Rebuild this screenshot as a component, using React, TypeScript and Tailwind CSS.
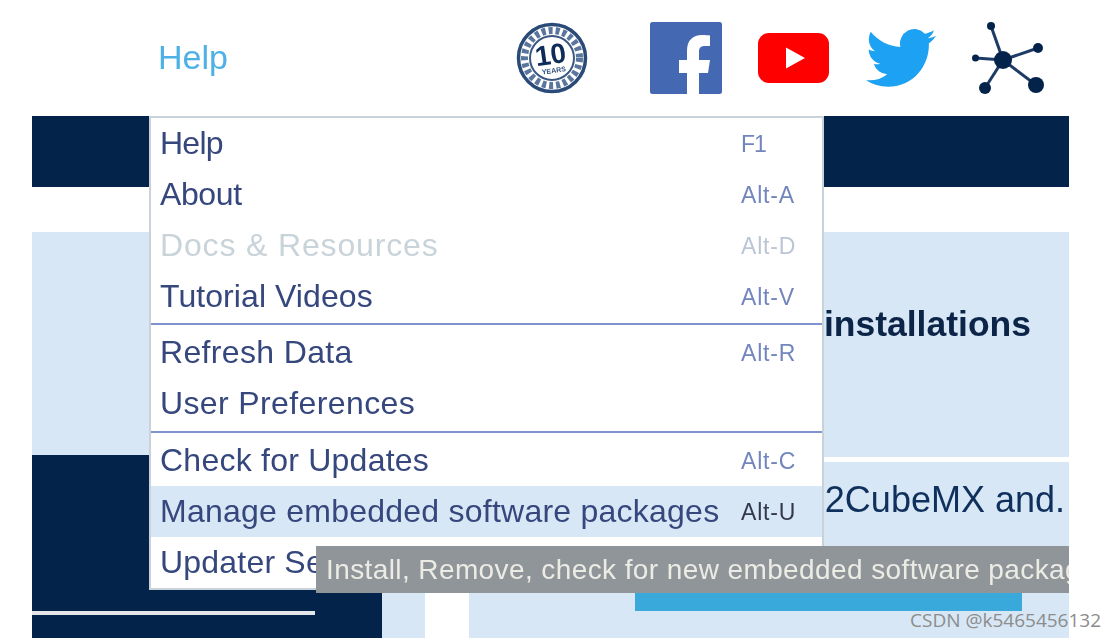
import React from "react";

type Item = { label: string; key?: string; state?: "disabled" | "active"; track: string };

const groups: Item[][] = [
  [
    { label: "Help", key: "F1", track: "tracking-[-0.75px]" },
    { label: "About", key: "Alt-A", track: "tracking-[-0.4px]" },
    { label: "Docs & Resources", key: "Alt-D", state: "disabled", track: "tracking-[0.85px]" },
    { label: "Tutorial Videos", key: "Alt-V", track: "tracking-[0.07px]" },
  ],
  [
    { label: "Refresh Data", key: "Alt-R", track: "tracking-[0.35px]" },
    { label: "User Preferences", track: "tracking-[0.38px]" },
  ],
  [
    { label: "Check for Updates", key: "Alt-C", track: "tracking-[0.24px]" },
    { label: "Manage embedded software packages", key: "Alt-U", state: "active", track: "tracking-[0.24px]" },
    { label: "Updater Settings", track: "tracking-[0.2px]" },
  ],
];

function Row({ item }: { item: Item }) {
  const bg = item.state === "active" ? "bg-[#d7e7f5]" : "bg-white";
  const label = item.state === "disabled" ? "text-[#c9d3da]" : "text-[#35477c]";
  const key =
    item.state === "disabled"
      ? "text-[#bcc5d6]"
      : item.state === "active"
        ? "text-[#33384f]"
        : "text-[#7285bd]";
  const keyTrack = item.key === "F1" ? "tracking-[-1px]" : "tracking-[0.8px]";
  return (
    <div className={`flex h-[51px] items-center pl-[9px] ${bg}`}>
      <span className={`w-[581px] shrink-0 whitespace-nowrap pb-[2px] text-[32px] leading-none ${label} ${item.track}`}>
        {item.label}
      </span>
      <span className={`whitespace-nowrap pt-[2px] text-[23px] leading-none ${key} ${keyTrack}`}>{item.key}</span>
    </div>
  );
}

function Badge() {
  return (
    <svg width="72" height="72" viewBox="0 0 72 72" className="shrink-0">
      <circle cx="36" cy="36" r="33.5" fill="#fff" stroke="#2a4a78" strokeWidth="3.5" />
      <circle cx="36" cy="36" r="27.5" fill="none" stroke="#5a769c" strokeWidth="7" strokeDasharray="4 3" />
      <circle cx="36" cy="36" r="22" fill="#fff" stroke="#3a5884" strokeWidth="2" />
      <g transform="rotate(-8 36 36)">
        <text x="35" y="42" textAnchor="middle" fontFamily="Liberation Sans" fontWeight="700" fontSize="28" fill="#0f2c58">
          10
        </text>
        <text x="36" y="51" textAnchor="middle" fontFamily="Liberation Sans" fontWeight="700" fontSize="7" fill="#2f4f7c">
          YEARS
        </text>
      </g>
    </svg>
  );
}

function Facebook() {
  return (
    <svg width="72" height="72" viewBox="0 0 72 72" className="shrink-0">
      <rect width="72" height="72" rx="2.5" fill="#4568b2" />
      <path
        d="M37 72V51H29V38H37V29C37 18 43 13 52 13C55 13 58 13.2 60 13.5V24H55C50.5 24 49 26 49 30V38H60L58 51H49V72z"
        fill="#fff"
      />
    </svg>
  );
}

function Youtube() {
  return (
    <svg width="71" height="50" viewBox="0 0 71 50" className="shrink-0">
      <rect width="71" height="50" rx="11" fill="#ff0000" />
      <path d="M28 14.5 47 25 28 35.5z" fill="#fff" />
    </svg>
  );
}

function Twitter() {
  return (
    <svg width="70" height="59" viewBox="0 0 24 20" preserveAspectRatio="none" className="shrink-0">
      <path
        transform="translate(0 -2.2)"
        fill="#1da1f2"
        d="M23.953 4.57a10 10 0 01-2.825.775 4.958 4.958 0 002.163-2.723c-.951.555-2.005.959-3.127 1.184a4.92 4.92 0 00-8.384 4.482C7.69 8.095 4.067 6.13 1.64 3.162a4.822 4.822 0 00-.666 2.475c0 1.71.87 3.213 2.188 4.096a4.904 4.904 0 01-2.228-.616v.06a4.923 4.923 0 003.946 4.827 4.996 4.996 0 01-2.212.085 4.936 4.936 0 004.604 3.417 9.867 9.867 0 01-6.102 2.105c-.39 0-.779-.023-1.17-.067a13.995 13.995 0 007.557 2.209c9.053 0 13.998-7.496 13.998-13.985 0-.21 0-.42-.015-.63A9.935 9.935 0 0024 4.59z"
      />
    </svg>
  );
}

function Network() {
  const c = "#03234b";
  const nodes: [number, number, number][] = [
    [19, 5, 4],
    [66, 27, 5],
    [3.5, 37, 3.5],
    [13, 67, 6],
    [64, 64, 8],
  ];
  return (
    <svg width="74" height="74" viewBox="0 0 74 74" className="shrink-0">
      {nodes.map(([x, y, r]) => (
        <g key={`${x}-${y}`}>
          <line x1="31" y1="39" x2={x} y2={y} stroke="#1d3b66" strokeWidth="3" />
          <circle cx={x} cy={y} r={r} fill={c} />
        </g>
      ))}
      <circle cx="31" cy="39" r="9" fill={c} />
    </svg>
  );
}

export default function App() {
  return (
    <div className="relative h-[638px] w-[1116px] overflow-hidden bg-white font-['Liberation_Sans',Arial,sans-serif]">
      <div className="relative h-full w-full blur-[0.6px]">
        <header className="flex h-[116px] items-center pl-[158px]">
          <span className="w-[358px] pb-[2px] text-[34px] leading-none text-[#4db1e6]">Help</span>
          <div className="flex items-center">
            <Badge />
            <div className="ml-[62px]"><Facebook /></div>
            <div className="ml-[36px]"><Youtube /></div>
            <div className="ml-[37px]"><Twitter /></div>
            <div className="ml-[36px]"><Network /></div>
          </div>
        </header>

        <main className="mx-[32px] w-[1037px]">
          <div className="h-[71px] bg-[#03234b]" />
          <section className="mt-[45px] flex h-[223px] justify-end bg-[#d7e7f5] pr-[38px] pt-[72px]">
            <span className="text-[35.5px] font-bold leading-[40px] text-[#0b2447]">installations</span>
          </section>
          <div className="flex h-[183px]">
            <div className="flex w-[350px] shrink-0 flex-col bg-[#03234b] pt-[156px]">
              <div className="h-[4px] w-[283px] bg-[#e4e6ea]" />
            </div>
            <div className="flex min-w-0 flex-1 flex-col">
              <div className="h-[2px] bg-[#d7e7f5]" />
              <div className="h-[5px] bg-white" />
              <div className="flex flex-1">
                <div className="w-[43px] bg-[#d7e7f5]" />
                <div className="w-[44px] bg-white" />
                <div className="flex flex-1 flex-col bg-[#d7e7f5] pt-[18px]">
                  <span className="self-end whitespace-nowrap pr-[4px] text-[36px] leading-[40px] text-[#0f2f5c]">STM32CubeMX and.</span>
                  <div className="ml-[166px] mt-[51px] h-[40px] w-[387px] bg-[#39a9dc]" />
                </div>
              </div>
            </div>
          </div>
        </main>

        <div className="absolute left-[149px] top-[116px] w-[675px] border-2 border-[#c9d2d8] bg-white">
          {groups.map((group, i) => (
            <div key={i}>
              {i > 0 && <div className={`h-[2px] bg-[#7f94cf] ${i === 1 ? "mt-[1px]" : "mt-[2px]"}`} />}
              <div className={i > 0 ? "pt-[2px]" : ""}>
                {group.map((item) => (
                  <Row key={item.label} item={item} />
                ))}
              </div>
            </div>
          ))}
        </div>

        <div className="absolute left-[316px] top-[546px] flex h-[47px] w-[753px] items-center overflow-hidden bg-[#90959a] pl-[10px]">
          <span className="whitespace-nowrap text-[28px] leading-none tracking-[0.4px] text-[#ecece4]">
            Install, Remove, check for new embedded software packages
          </span>
        </div>
      </div>

      <span className="absolute left-[910px] top-[608px] whitespace-nowrap font-['Open_Sans',sans-serif] text-[19px] leading-[24px] text-[#8c8c8c]">
        CSDN @k5465456132
      </span>
    </div>
  );
}
